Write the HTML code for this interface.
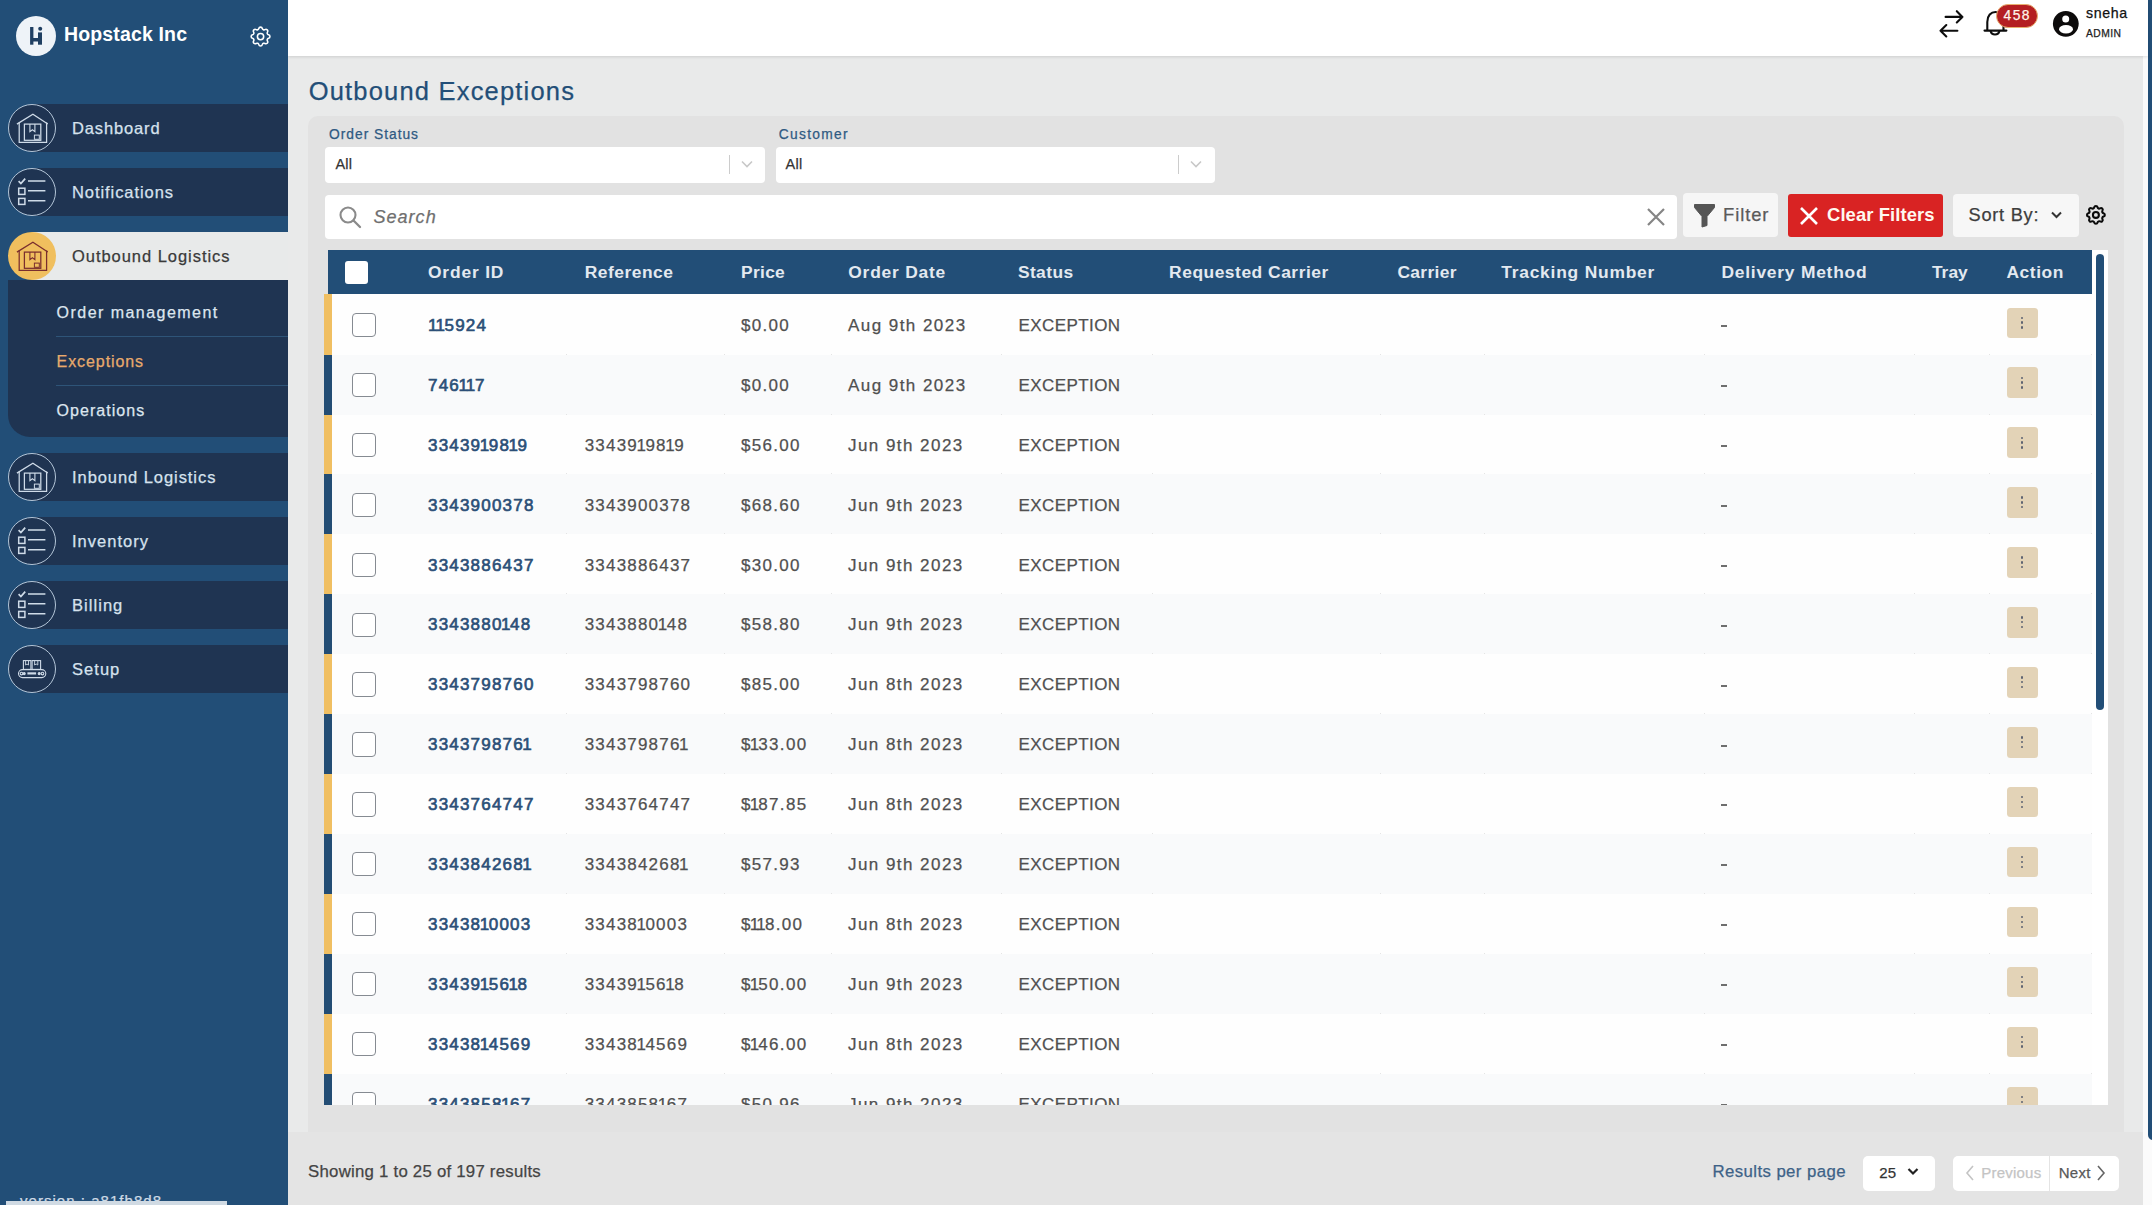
<!DOCTYPE html>
<html><head><meta charset="utf-8"><title>Outbound Exceptions</title>
<style>
html,body{margin:0;padding:0;width:2152px;height:1205px;overflow:hidden;background:#e9eaea}
body{position:relative;font-family:"Liberation Sans",sans-serif}
.r{position:absolute;box-sizing:border-box}
.t{position:absolute;white-space:nowrap;line-height:1;-webkit-font-smoothing:antialiased;-webkit-text-stroke:0.25px currentColor}
.t[style*='font-weight:700']{-webkit-text-stroke:0}
</style></head><body>
<div class="r" style="left:0px;top:0px;width:2152px;height:1205px;background:#e9eaea;"></div>
<div class="r" style="left:2143px;top:0px;width:9px;height:1205px;background:#fbfbfb;"></div>
<div class="r" style="left:2148px;top:0;width:10px;height:1140px;background:#224e77;border-radius:0 0 5px 5px"></div>
<div class="r" style="left:288px;top:0px;width:1860px;height:56px;background:#ffffff;box-shadow:0 1px 3px rgba(0,0,0,0.12);"></div>
<div class="r" style="left:288px;top:1132px;width:1855px;height:73px;background:#e4e4e4;"></div>
<div class="r" style="left:308px;top:116px;width:1816px;height:1016px;background:#e2e2e2;border-radius:10px 10px 0 0"></div>
<div class="r" style="left:0px;top:0px;width:288px;height:1205px;background:#224e77;"></div>
<svg class="r" style="left:16px;top:16px" width="40" height="40" viewBox="0 0 40 40">
<circle cx="20" cy="20" r="20" fill="#eef3f8"/>
<rect x="14.1" y="11" width="3.3" height="17.7" fill="#1f3f62"/>
<rect x="17" y="22" width="5.5" height="3.5" fill="#1f3f62"/>
<rect x="22" y="16.4" width="4" height="12.3" fill="#1f3f62"/>
<circle cx="24.2" cy="12.7" r="2" fill="#1f3f62"/>
</svg>
<div class="t" style="left:64.0px;top:25.29px;font-size:19.5px;color:#ffffff;font-weight:700;letter-spacing:0.148px;">Hopstack Inc</div>
<svg class="r" style="left:247.7px;top:23.6px" width="25.1" height="25.1" viewBox="0 0 24 24"><path d="M10.325 4.317c.426-1.756 2.924-1.756 3.35 0a1.724 1.724 0 002.573 1.066c1.543-.94 3.31.826 2.37 2.37a1.724 1.724 0 001.065 2.572c1.756.426 1.756 2.924 0 3.35a1.724 1.724 0 00-1.066 2.573c.94 1.543-.826 3.31-2.37 2.37a1.724 1.724 0 00-2.572 1.065c-.426 1.756-2.924 1.756-3.35 0a1.724 1.724 0 00-2.573-1.066c-1.543.94-3.31-.826-2.37-2.37a1.724 1.724 0 00-1.065-2.572c-1.756-.426-1.756-2.924 0-3.35a1.724 1.724 0 001.066-2.573c-.94-1.543.826-3.31 2.37-2.37.996.608 2.296.07 2.572-1.065z" fill="none" stroke="#ffffff" stroke-width="1.5" stroke-linejoin="round"/><circle cx="12" cy="12" r="3" fill="none" stroke="#ffffff" stroke-width="1.5"/></svg>
<div class="r" style="left:32px;top:104px;width:256px;height:48px;background:#1f3452"></div>
<svg class="r" style="left:8px;top:104px" width="48" height="48" viewBox="0 0 48 48"><circle cx="24" cy="24" r="23.5" fill="#1f3452" stroke="#b4c6d8" stroke-width="1"/><g fill="none" stroke="#cfdbe8" stroke-width="1.25">
<path d="M8.9 20.1 L24.9 10.2 L39.8 20.1"/>
<path d="M11.2 18.6 V38.3 H38.6 V18.6"/>
<rect x="16.4" y="20.1" width="16.4" height="16.2"/>
<path d="M21.9 20.1 V27.6 L24.4 25.8 L26.9 27.6 V20.1" stroke-width="1.1"/>
<rect x="26.4" y="31.1" width="4.9" height="4.2" stroke-width="1"/></g></svg>
<div class="t" style="left:72.0px;top:119.63px;font-size:16.5px;color:#d6e2ee;letter-spacing:0.858px;">Dashboard</div>
<div class="r" style="left:32px;top:168px;width:256px;height:48px;background:#1f3452"></div>
<svg class="r" style="left:8px;top:168px" width="48" height="48" viewBox="0 0 48 48"><circle cx="24" cy="24" r="23.5" fill="#1f3452" stroke="#b4c6d8" stroke-width="1"/><g fill="none" stroke="#cfdbe8" stroke-width="1.5">
<path d="M10.6 13.2 L12.9 15.6 L17.2 10.6" stroke-width="1.7"/>
<rect x="10.7" y="20.2" width="6.2" height="6.2"/>
<rect x="10.7" y="30.4" width="6.2" height="6"/>
<path d="M20 12.9 H37.4 M20 22.8 H37.4 M20 32.8 H37.4"/></g></svg>
<div class="t" style="left:72.0px;top:183.63px;font-size:16.5px;color:#d6e2ee;letter-spacing:0.927px;">Notifications</div>
<div class="r" style="left:8px;top:280px;width:280px;height:157px;background:#1f3452;border-radius:0 0 0 22px"></div>
<div class="r" style="left:32px;top:232px;width:256px;height:48px;background:#e8eaea"></div>
<svg class="r" style="left:8px;top:232px" width="48" height="48" viewBox="0 0 48 48"><circle cx="24" cy="24" r="24" fill="#f0bf5e"/><g fill="none" stroke="#7a2e2e" stroke-width="1.25">
<path d="M8.9 20.1 L24.9 10.2 L39.8 20.1"/>
<path d="M11.2 18.6 V38.3 H38.6 V18.6"/>
<rect x="16.4" y="20.1" width="16.4" height="16.2"/>
<path d="M21.9 20.1 V27.6 L24.4 25.8 L26.9 27.6 V20.1" stroke-width="1.1"/>
<rect x="26.4" y="31.1" width="4.9" height="4.2" stroke-width="1"/></g></svg>
<div class="t" style="left:72.0px;top:247.63px;font-size:16.5px;color:#3a3a3a;letter-spacing:0.955px;">Outbound Logistics</div>
<div class="t" style="left:56.6px;top:304.76px;font-size:16px;color:#dde6ef;letter-spacing:1.458px;">Order management</div>
<div class="r" style="left:56px;top:336px;width:232px;height:1px;background:#2e5478;"></div>
<div class="t" style="left:56.6px;top:353.66px;font-size:16px;color:#e8aa6c;letter-spacing:0.915px;">Exceptions</div>
<div class="r" style="left:56px;top:385px;width:232px;height:1px;background:#2e5478;"></div>
<div class="t" style="left:56.6px;top:402.66px;font-size:16px;color:#dde6ef;letter-spacing:1.037px;">Operations</div>
<div class="r" style="left:32px;top:453px;width:256px;height:48px;background:#1f3452"></div>
<svg class="r" style="left:8px;top:453px" width="48" height="48" viewBox="0 0 48 48"><circle cx="24" cy="24" r="23.5" fill="#1f3452" stroke="#b4c6d8" stroke-width="1"/><g fill="none" stroke="#cfdbe8" stroke-width="1.25">
<path d="M8.9 20.1 L24.9 10.2 L39.8 20.1"/>
<path d="M11.2 18.6 V38.3 H38.6 V18.6"/>
<rect x="16.4" y="20.1" width="16.4" height="16.2"/>
<path d="M21.9 20.1 V27.6 L24.4 25.8 L26.9 27.6 V20.1" stroke-width="1.1"/>
<rect x="26.4" y="31.1" width="4.9" height="4.2" stroke-width="1"/></g></svg>
<div class="t" style="left:72.0px;top:468.63px;font-size:16.5px;color:#d6e2ee;letter-spacing:0.935px;">Inbound Logistics</div>
<div class="r" style="left:32px;top:517px;width:256px;height:48px;background:#1f3452"></div>
<svg class="r" style="left:8px;top:517px" width="48" height="48" viewBox="0 0 48 48"><circle cx="24" cy="24" r="23.5" fill="#1f3452" stroke="#b4c6d8" stroke-width="1"/><g fill="none" stroke="#cfdbe8" stroke-width="1.5">
<path d="M10.6 13.2 L12.9 15.6 L17.2 10.6" stroke-width="1.7"/>
<rect x="10.7" y="20.2" width="6.2" height="6.2"/>
<rect x="10.7" y="30.4" width="6.2" height="6"/>
<path d="M20 12.9 H37.4 M20 22.8 H37.4 M20 32.8 H37.4"/></g></svg>
<div class="t" style="left:72.0px;top:532.63px;font-size:16.5px;color:#d6e2ee;letter-spacing:1.016px;">Inventory</div>
<div class="r" style="left:32px;top:581px;width:256px;height:48px;background:#1f3452"></div>
<svg class="r" style="left:8px;top:581px" width="48" height="48" viewBox="0 0 48 48"><circle cx="24" cy="24" r="23.5" fill="#1f3452" stroke="#b4c6d8" stroke-width="1"/><g fill="none" stroke="#cfdbe8" stroke-width="1.5">
<path d="M10.6 13.2 L12.9 15.6 L17.2 10.6" stroke-width="1.7"/>
<rect x="10.7" y="20.2" width="6.2" height="6.2"/>
<rect x="10.7" y="30.4" width="6.2" height="6"/>
<path d="M20 12.9 H37.4 M20 22.8 H37.4 M20 32.8 H37.4"/></g></svg>
<div class="t" style="left:72.0px;top:596.63px;font-size:16.5px;color:#d6e2ee;letter-spacing:1.045px;">Billing</div>
<div class="r" style="left:32px;top:645px;width:256px;height:48px;background:#1f3452"></div>
<svg class="r" style="left:8px;top:645px" width="48" height="48" viewBox="0 0 48 48"><circle cx="24" cy="24" r="23.5" fill="#1f3452" stroke="#b4c6d8" stroke-width="1"/><g fill="none" stroke="#cfdbe8" stroke-width="1.1">
<rect x="10.5" y="24.6" width="27.3" height="8" rx="4"/>
<rect x="19.4" y="27.3" width="8.7" height="2.2" fill="#cfdbe8" stroke="none"/>
<circle cx="13.5" cy="28.6" r="1.3"/><circle cx="16.2" cy="28.6" r="1" fill="#cfdbe8"/>
<circle cx="31.2" cy="28.6" r="1" fill="#cfdbe8"/><circle cx="34.5" cy="28.6" r="1.3"/>
<rect x="15.4" y="15.6" width="7.5" height="8.8"/>
<rect x="24.1" y="15.6" width="8.5" height="8.8"/>
<path d="M17.6 15.6 V20 L19 19 L20.5 20 V15.6 M26.6 15.6 V20 L28.2 19 L29.8 20 V15.6" stroke-width="0.9"/></g></svg>
<div class="t" style="left:72.0px;top:660.63px;font-size:16.5px;color:#d6e2ee;letter-spacing:1.044px;">Setup</div>
<div class="t" style="left:20.0px;top:1192.80px;font-size:15px;color:#cfdbe6;letter-spacing:1.034px;">version : a81fb8d8</div>
<div class="r" style="left:6px;top:1201px;width:221px;height:4px;background:#d0dae3;"></div>
<svg class="r" style="left:1930px;top:0px" width="90" height="45" viewBox="1930 0 90 45">
<g fill="none" stroke="#0d0d0d" stroke-width="2.1" stroke-linecap="round" stroke-linejoin="round">
<path d="M1945.6 16.9 H1962.4 M1956.8 11.2 L1962.4 16.9 L1956.8 22.4"/>
<path d="M1957.4 30.7 H1940.5 M1946.3 25.1 L1940.5 30.7 L1946.3 36.4"/>
<path d="M1984.5 30.6 H2006.4 M1987.3 30.6 V22 C1987.3 15.5 1991 12 1995.5 12 C2000 12 2003.5 15.5 2003.5 22 V30.6"/>
<path d="M1990.6 31 A4.5 4.5 0 0 0 1999.4 31"/>
</g></svg>
<div class="r" style="left:1996.2px;top:4.1px;width:41.7px;height:23.5px;background:#b41f22;border-radius:12px;border:1px solid #e8b070"></div>
<div class="t" style="left:2003.6px;top:8.72px;font-size:13.8px;color:#fff6ea;letter-spacing:1.384px;">458</div>
<svg class="r" style="left:2045px;top:0px" width="40" height="45" viewBox="2045 0 40 45">
<circle cx="2065.8" cy="23.85" r="12.9" fill="#0d0b0b"/>
<circle cx="2065.7" cy="19" r="3.5" fill="#fff"/>
<ellipse cx="2066" cy="29.3" rx="7" ry="4.2" fill="#fff"/>
</svg>
<div class="t" style="left:2086.0px;top:5.98px;font-size:14.2px;color:#111;letter-spacing:0.636px;">sneha</div>
<div class="t" style="left:2086.0px;top:29.08px;font-size:10.3px;color:#222;letter-spacing:0.428px;">ADMIN</div>
<div class="t" style="left:308.7px;top:79.01px;font-size:25.5px;color:#224e77;letter-spacing:1.192px;">Outbound Exceptions</div>
<div class="t" style="left:329.1px;top:127.92px;font-size:13.8px;color:#2f5a82;letter-spacing:0.971px;">Order Status</div>
<div class="t" style="left:778.7px;top:128.12px;font-size:13.8px;color:#2f5a82;letter-spacing:1.312px;">Customer</div>
<div class="r" style="left:325px;top:147px;width:440px;height:36px;background:#fff;border-radius:4px"></div>
<div class="t" style="left:335.5px;top:156.73px;font-size:14.5px;color:#333;letter-spacing:0.188px;">All</div>
<div class="r" style="left:729px;top:155px;width:1px;height:19px;background:#cccccc;"></div>
<svg class="r" style="left:740px;top:159px" width="14" height="10" viewBox="0 0 14 10"><path d="M2 2.5 L7 7.5 L12 2.5" fill="none" stroke="#c8c8c8" stroke-width="1.6"/></svg>
<div class="r" style="left:776px;top:147px;width:439px;height:36px;background:#fff;border-radius:4px"></div>
<div class="t" style="left:785.6px;top:156.73px;font-size:14.5px;color:#333;letter-spacing:0.238px;">All</div>
<div class="r" style="left:1178px;top:155px;width:1px;height:19px;background:#cccccc;"></div>
<svg class="r" style="left:1189px;top:159px" width="14" height="10" viewBox="0 0 14 10"><path d="M2 2.5 L7 7.5 L12 2.5" fill="none" stroke="#c8c8c8" stroke-width="1.6"/></svg>
<div class="r" style="left:325px;top:195px;width:1352px;height:44px;background:#fff;border-radius:4px"></div>
<svg class="r" style="left:338px;top:205px" width="25" height="25" viewBox="0 0 25 25">
<circle cx="10" cy="10" r="7.5" fill="none" stroke="#8a8a8a" stroke-width="2.1"/>
<path d="M15.5 15.5 L22 22" stroke="#8a8a8a" stroke-width="2.3" stroke-linecap="round"/></svg>
<div class="t" style="left:373.4px;top:208.26px;font-size:18px;color:#6f6f6f;font-style:italic;letter-spacing:1.051px;">Search</div>
<svg class="r" style="left:1646px;top:207px" width="20" height="20" viewBox="0 0 20 20">
<path d="M2 2 L18 18 M18 2 L2 18" stroke="#858585" stroke-width="2.2"/></svg>
<div class="r" style="left:1683px;top:193px;width:95px;height:44px;background:#f6f6f6;border-radius:4px"></div>
<svg class="r" style="left:1693px;top:203px" width="23" height="25" viewBox="0 0 23 25">
<path d="M1.5 1.5 H21.5 V4.5 L14 13.5 V22.5 L9 24 V13.5 L1.5 4.5 Z" fill="#555" stroke="#555" stroke-width="1" stroke-linejoin="round"/></svg>
<div class="t" style="left:1723.0px;top:205.72px;font-size:18.4px;color:#5a5a5a;letter-spacing:0.925px;">Filter</div>
<div class="r" style="left:1788px;top:194px;width:155px;height:43px;background:#d92323;border-radius:3px"></div>
<svg class="r" style="left:1799px;top:206px" width="20" height="20" viewBox="0 0 20 20">
<path d="M2 2 L18 18 M18 2 L2 18" stroke="#fff" stroke-width="2.6"/></svg>
<div class="t" style="left:1827.0px;top:205.72px;font-size:18.4px;color:#fff8f0;font-weight:700;letter-spacing:0.107px;">Clear Filters</div>
<div class="r" style="left:1953px;top:194px;width:126px;height:43px;background:#f7f7f7;border-radius:4px"></div>
<div class="t" style="left:1968.5px;top:205.89px;font-size:18.2px;color:#3d3d3d;letter-spacing:0.759px;">Sort By:</div>
<svg class="r" style="left:2050px;top:210px" width="13" height="10" viewBox="0 0 13 10">
<path d="M2 2.5 L6.5 7 L11 2.5" fill="none" stroke="#333" stroke-width="2"/></svg>
<svg class="r" style="left:2083.6px;top:203.2px" width="23.8" height="23.8" viewBox="0 0 24 24"><path d="M10.325 4.317c.426-1.756 2.924-1.756 3.35 0a1.724 1.724 0 002.573 1.066c1.543-.94 3.31.826 2.37 2.37a1.724 1.724 0 001.065 2.572c1.756.426 1.756 2.924 0 3.35a1.724 1.724 0 00-1.066 2.573c.94 1.543-.826 3.31-2.37 2.37a1.724 1.724 0 00-2.572 1.065c-.426 1.756-2.924 1.756-3.35 0a1.724 1.724 0 00-2.573-1.066c-1.543.94-3.31-.826-2.37-2.37a1.724 1.724 0 00-1.065-2.572c-1.756-.426-1.756-2.924 0-3.35a1.724 1.724 0 001.066-2.573c-.94-1.543.826-3.31 2.37-2.37.996.608 2.296.07 2.572-1.065z" fill="none" stroke="#0a0a0a" stroke-width="2.1" stroke-linejoin="round"/><circle cx="12" cy="12" r="3" fill="none" stroke="#0a0a0a" stroke-width="2.1"/></svg>
<div class="r" style="left:328px;top:250px;width:1780px;height:855px;background:#ffffff;"></div>
<div class="r" style="left:328px;top:250px;width:1764px;height:44px;background:#224e77;"></div>
<div class="r" style="left:345px;top:261px;width:23px;height:23px;background:#fff;border-radius:3px"></div>
<div class="t" style="left:428.0px;top:263.57px;font-size:17.4px;color:#e3e9f0;font-weight:700;letter-spacing:0.829px;">Order ID</div>
<div class="t" style="left:584.7px;top:263.57px;font-size:17.4px;color:#e3e9f0;font-weight:700;letter-spacing:0.511px;">Reference</div>
<div class="t" style="left:741.1px;top:263.57px;font-size:17.4px;color:#e3e9f0;font-weight:700;letter-spacing:0.288px;">Price</div>
<div class="t" style="left:848.3px;top:263.57px;font-size:17.4px;color:#e3e9f0;font-weight:700;letter-spacing:0.779px;">Order Date</div>
<div class="t" style="left:1017.9px;top:263.57px;font-size:17.4px;color:#e3e9f0;font-weight:700;letter-spacing:0.409px;">Status</div>
<div class="t" style="left:1169.1px;top:263.57px;font-size:17.4px;color:#e3e9f0;font-weight:700;letter-spacing:0.526px;">Requested Carrier</div>
<div class="t" style="left:1397.4px;top:263.57px;font-size:17.4px;color:#e3e9f0;font-weight:700;letter-spacing:0.359px;">Carrier</div>
<div class="t" style="left:1501.2px;top:263.57px;font-size:17.4px;color:#e3e9f0;font-weight:700;letter-spacing:0.787px;">Tracking Number</div>
<div class="t" style="left:1721.4px;top:263.57px;font-size:17.4px;color:#e3e9f0;font-weight:700;letter-spacing:0.777px;">Delivery Method</div>
<div class="t" style="left:1931.9px;top:263.57px;font-size:17.4px;color:#e3e9f0;font-weight:700;letter-spacing:0.040px;">Tray</div>
<div class="t" style="left:2006.5px;top:263.57px;font-size:17.4px;color:#e3e9f0;font-weight:700;letter-spacing:0.558px;">Action</div>
<div class="r" style="left:0;top:0;width:2152px;height:1105px;overflow:hidden">
<div class="r" style="left:332px;top:294px;width:1760px;height:60.63px;background:#fefefe;"></div>
<div class="r" style="left:323.8px;top:294px;width:8.4px;height:60.63px;background:#f0bf62;"></div>
<div class="r" style="left:566px;top:353.63px;width:1px;height:2px;background:#e4e4e4;"></div>
<div class="r" style="left:724px;top:353.63px;width:1px;height:2px;background:#e4e4e4;"></div>
<div class="r" style="left:831px;top:353.63px;width:1px;height:2px;background:#e4e4e4;"></div>
<div class="r" style="left:1001px;top:353.63px;width:1px;height:2px;background:#e4e4e4;"></div>
<div class="r" style="left:1152px;top:353.63px;width:1px;height:2px;background:#e4e4e4;"></div>
<div class="r" style="left:1380px;top:353.63px;width:1px;height:2px;background:#e4e4e4;"></div>
<div class="r" style="left:1484px;top:353.63px;width:1px;height:2px;background:#e4e4e4;"></div>
<div class="r" style="left:1704px;top:353.63px;width:1px;height:2px;background:#e4e4e4;"></div>
<div class="r" style="left:1914px;top:353.63px;width:1px;height:2px;background:#e4e4e4;"></div>
<div class="r" style="left:1989px;top:353.63px;width:1px;height:2px;background:#e4e4e4;"></div>
<div class="r" style="left:2091px;top:353.63px;width:1px;height:2px;background:#e4e4e4;"></div>
<div class="r" style="left:352.2px;top:312.90px;width:24.2px;height:24.2px;border:1.3px solid #868b92;border-radius:4px;background:#fff"></div>
<div class="t" style="left:428.0px;top:316.81px;font-size:17px;color:#2b4f77;letter-spacing:1.200px;-webkit-text-stroke:0.65px #2b4f77;"><span style="margin:0 -1.60px 0 0.00px">1</span><span style="margin:0 -1.60px 0 -1.60px">1</span>5924</div>
<div class="t" style="left:741.0px;top:316.81px;font-size:17px;color:#505050;letter-spacing:1.300px;">$0.00</div>
<div class="t" style="left:848.0px;top:316.81px;font-size:17px;color:#505050;letter-spacing:1.450px;">Aug 9th 2023</div>
<div class="t" style="left:1018.5px;top:316.81px;font-size:17px;color:#505050;letter-spacing:0.420px;">EXCEPTION</div>
<div class="r" style="left:1720.5px;top:325px;width:6.5px;height:1.6px;background:#6e6e6e;"></div>
<div class="r" style="left:2006.5px;top:307.50px;width:31.5px;height:30.5px;background:#e3d3b7;border-radius:3.5px"></div>
<div class="r" style="left:2021px;top:316.65px;width:2.4px;height:2.4px;background:#5e6370;border-radius:50%"></div>
<div class="r" style="left:2021px;top:321.45px;width:2.4px;height:2.4px;background:#5e6370;border-radius:50%"></div>
<div class="r" style="left:2021px;top:326.25px;width:2.4px;height:2.4px;background:#5e6370;border-radius:50%"></div>
<div class="r" style="left:332px;top:354.63px;width:1760px;height:59.93px;background:#f9fafb;"></div>
<div class="r" style="left:323.8px;top:354.63px;width:8.4px;height:59.93px;background:#234d74;"></div>
<div class="r" style="left:566px;top:413.56px;width:1px;height:2px;background:#e4e4e4;"></div>
<div class="r" style="left:724px;top:413.56px;width:1px;height:2px;background:#e4e4e4;"></div>
<div class="r" style="left:831px;top:413.56px;width:1px;height:2px;background:#e4e4e4;"></div>
<div class="r" style="left:1001px;top:413.56px;width:1px;height:2px;background:#e4e4e4;"></div>
<div class="r" style="left:1152px;top:413.56px;width:1px;height:2px;background:#e4e4e4;"></div>
<div class="r" style="left:1380px;top:413.56px;width:1px;height:2px;background:#e4e4e4;"></div>
<div class="r" style="left:1484px;top:413.56px;width:1px;height:2px;background:#e4e4e4;"></div>
<div class="r" style="left:1704px;top:413.56px;width:1px;height:2px;background:#e4e4e4;"></div>
<div class="r" style="left:1914px;top:413.56px;width:1px;height:2px;background:#e4e4e4;"></div>
<div class="r" style="left:1989px;top:413.56px;width:1px;height:2px;background:#e4e4e4;"></div>
<div class="r" style="left:2091px;top:413.56px;width:1px;height:2px;background:#e4e4e4;"></div>
<div class="r" style="left:352.2px;top:372.83px;width:24.2px;height:24.2px;border:1.3px solid #868b92;border-radius:4px;background:#fff"></div>
<div class="t" style="left:428.0px;top:376.74px;font-size:17px;color:#2b4f77;letter-spacing:1.200px;-webkit-text-stroke:0.65px #2b4f77;">746<span style="margin:0 -1.60px 0 -1.60px">1</span><span style="margin:0 -1.60px 0 -1.60px">1</span>7</div>
<div class="t" style="left:741.0px;top:376.74px;font-size:17px;color:#505050;letter-spacing:1.300px;">$0.00</div>
<div class="t" style="left:848.0px;top:376.74px;font-size:17px;color:#505050;letter-spacing:1.450px;">Aug 9th 2023</div>
<div class="t" style="left:1018.5px;top:376.74px;font-size:17px;color:#505050;letter-spacing:0.420px;">EXCEPTION</div>
<div class="r" style="left:1720.5px;top:385px;width:6.5px;height:1.6px;background:#6e6e6e;"></div>
<div class="r" style="left:2006.5px;top:367.43px;width:31.5px;height:30.5px;background:#e3d3b7;border-radius:3.5px"></div>
<div class="r" style="left:2021px;top:376.58px;width:2.4px;height:2.4px;background:#5e6370;border-radius:50%"></div>
<div class="r" style="left:2021px;top:381.38px;width:2.4px;height:2.4px;background:#5e6370;border-radius:50%"></div>
<div class="r" style="left:2021px;top:386.18px;width:2.4px;height:2.4px;background:#5e6370;border-radius:50%"></div>
<div class="r" style="left:332px;top:414.56px;width:1760px;height:59.93px;background:#fefefe;"></div>
<div class="r" style="left:323.8px;top:414.56px;width:8.4px;height:59.93px;background:#f0bf62;"></div>
<div class="r" style="left:566px;top:473.49px;width:1px;height:2px;background:#e4e4e4;"></div>
<div class="r" style="left:724px;top:473.49px;width:1px;height:2px;background:#e4e4e4;"></div>
<div class="r" style="left:831px;top:473.49px;width:1px;height:2px;background:#e4e4e4;"></div>
<div class="r" style="left:1001px;top:473.49px;width:1px;height:2px;background:#e4e4e4;"></div>
<div class="r" style="left:1152px;top:473.49px;width:1px;height:2px;background:#e4e4e4;"></div>
<div class="r" style="left:1380px;top:473.49px;width:1px;height:2px;background:#e4e4e4;"></div>
<div class="r" style="left:1484px;top:473.49px;width:1px;height:2px;background:#e4e4e4;"></div>
<div class="r" style="left:1704px;top:473.49px;width:1px;height:2px;background:#e4e4e4;"></div>
<div class="r" style="left:1914px;top:473.49px;width:1px;height:2px;background:#e4e4e4;"></div>
<div class="r" style="left:1989px;top:473.49px;width:1px;height:2px;background:#e4e4e4;"></div>
<div class="r" style="left:2091px;top:473.49px;width:1px;height:2px;background:#e4e4e4;"></div>
<div class="r" style="left:352.2px;top:432.76px;width:24.2px;height:24.2px;border:1.3px solid #868b92;border-radius:4px;background:#fff"></div>
<div class="t" style="left:428.0px;top:436.67px;font-size:17px;color:#2b4f77;letter-spacing:1.200px;-webkit-text-stroke:0.65px #2b4f77;">33439<span style="margin:0 -1.60px 0 -1.60px">1</span>98<span style="margin:0 -1.60px 0 -1.60px">1</span>9</div>
<div class="t" style="left:584.7px;top:436.67px;font-size:17px;color:#505050;letter-spacing:1.200px;">33439<span style="margin:0 -1.60px 0 -1.60px">1</span>98<span style="margin:0 -1.60px 0 -1.60px">1</span>9</div>
<div class="t" style="left:741.0px;top:436.67px;font-size:17px;color:#505050;letter-spacing:1.300px;">$56.00</div>
<div class="t" style="left:848.0px;top:436.67px;font-size:17px;color:#505050;letter-spacing:1.450px;">Jun 9th 2023</div>
<div class="t" style="left:1018.5px;top:436.67px;font-size:17px;color:#505050;letter-spacing:0.420px;">EXCEPTION</div>
<div class="r" style="left:1720.5px;top:445px;width:6.5px;height:1.6px;background:#6e6e6e;"></div>
<div class="r" style="left:2006.5px;top:427.36px;width:31.5px;height:30.5px;background:#e3d3b7;border-radius:3.5px"></div>
<div class="r" style="left:2021px;top:436.51px;width:2.4px;height:2.4px;background:#5e6370;border-radius:50%"></div>
<div class="r" style="left:2021px;top:441.31px;width:2.4px;height:2.4px;background:#5e6370;border-radius:50%"></div>
<div class="r" style="left:2021px;top:446.11px;width:2.4px;height:2.4px;background:#5e6370;border-radius:50%"></div>
<div class="r" style="left:332px;top:474.49px;width:1760px;height:59.93px;background:#f9fafb;"></div>
<div class="r" style="left:323.8px;top:474.49px;width:8.4px;height:59.93px;background:#234d74;"></div>
<div class="r" style="left:566px;top:533.42px;width:1px;height:2px;background:#e4e4e4;"></div>
<div class="r" style="left:724px;top:533.42px;width:1px;height:2px;background:#e4e4e4;"></div>
<div class="r" style="left:831px;top:533.42px;width:1px;height:2px;background:#e4e4e4;"></div>
<div class="r" style="left:1001px;top:533.42px;width:1px;height:2px;background:#e4e4e4;"></div>
<div class="r" style="left:1152px;top:533.42px;width:1px;height:2px;background:#e4e4e4;"></div>
<div class="r" style="left:1380px;top:533.42px;width:1px;height:2px;background:#e4e4e4;"></div>
<div class="r" style="left:1484px;top:533.42px;width:1px;height:2px;background:#e4e4e4;"></div>
<div class="r" style="left:1704px;top:533.42px;width:1px;height:2px;background:#e4e4e4;"></div>
<div class="r" style="left:1914px;top:533.42px;width:1px;height:2px;background:#e4e4e4;"></div>
<div class="r" style="left:1989px;top:533.42px;width:1px;height:2px;background:#e4e4e4;"></div>
<div class="r" style="left:2091px;top:533.42px;width:1px;height:2px;background:#e4e4e4;"></div>
<div class="r" style="left:352.2px;top:492.69px;width:24.2px;height:24.2px;border:1.3px solid #868b92;border-radius:4px;background:#fff"></div>
<div class="t" style="left:428.0px;top:496.60px;font-size:17px;color:#2b4f77;letter-spacing:1.200px;-webkit-text-stroke:0.65px #2b4f77;">3343900378</div>
<div class="t" style="left:584.7px;top:496.60px;font-size:17px;color:#505050;letter-spacing:1.200px;">3343900378</div>
<div class="t" style="left:741.0px;top:496.60px;font-size:17px;color:#505050;letter-spacing:1.300px;">$68.60</div>
<div class="t" style="left:848.0px;top:496.60px;font-size:17px;color:#505050;letter-spacing:1.450px;">Jun 9th 2023</div>
<div class="t" style="left:1018.5px;top:496.60px;font-size:17px;color:#505050;letter-spacing:0.420px;">EXCEPTION</div>
<div class="r" style="left:1720.5px;top:505px;width:6.5px;height:1.6px;background:#6e6e6e;"></div>
<div class="r" style="left:2006.5px;top:487.29px;width:31.5px;height:30.5px;background:#e3d3b7;border-radius:3.5px"></div>
<div class="r" style="left:2021px;top:496.44px;width:2.4px;height:2.4px;background:#5e6370;border-radius:50%"></div>
<div class="r" style="left:2021px;top:501.24px;width:2.4px;height:2.4px;background:#5e6370;border-radius:50%"></div>
<div class="r" style="left:2021px;top:506.04px;width:2.4px;height:2.4px;background:#5e6370;border-radius:50%"></div>
<div class="r" style="left:332px;top:534.42px;width:1760px;height:59.93px;background:#fefefe;"></div>
<div class="r" style="left:323.8px;top:534.42px;width:8.4px;height:59.93px;background:#f0bf62;"></div>
<div class="r" style="left:566px;top:593.35px;width:1px;height:2px;background:#e4e4e4;"></div>
<div class="r" style="left:724px;top:593.35px;width:1px;height:2px;background:#e4e4e4;"></div>
<div class="r" style="left:831px;top:593.35px;width:1px;height:2px;background:#e4e4e4;"></div>
<div class="r" style="left:1001px;top:593.35px;width:1px;height:2px;background:#e4e4e4;"></div>
<div class="r" style="left:1152px;top:593.35px;width:1px;height:2px;background:#e4e4e4;"></div>
<div class="r" style="left:1380px;top:593.35px;width:1px;height:2px;background:#e4e4e4;"></div>
<div class="r" style="left:1484px;top:593.35px;width:1px;height:2px;background:#e4e4e4;"></div>
<div class="r" style="left:1704px;top:593.35px;width:1px;height:2px;background:#e4e4e4;"></div>
<div class="r" style="left:1914px;top:593.35px;width:1px;height:2px;background:#e4e4e4;"></div>
<div class="r" style="left:1989px;top:593.35px;width:1px;height:2px;background:#e4e4e4;"></div>
<div class="r" style="left:2091px;top:593.35px;width:1px;height:2px;background:#e4e4e4;"></div>
<div class="r" style="left:352.2px;top:552.62px;width:24.2px;height:24.2px;border:1.3px solid #868b92;border-radius:4px;background:#fff"></div>
<div class="t" style="left:428.0px;top:556.53px;font-size:17px;color:#2b4f77;letter-spacing:1.200px;-webkit-text-stroke:0.65px #2b4f77;">3343886437</div>
<div class="t" style="left:584.7px;top:556.53px;font-size:17px;color:#505050;letter-spacing:1.200px;">3343886437</div>
<div class="t" style="left:741.0px;top:556.53px;font-size:17px;color:#505050;letter-spacing:1.300px;">$30.00</div>
<div class="t" style="left:848.0px;top:556.53px;font-size:17px;color:#505050;letter-spacing:1.450px;">Jun 9th 2023</div>
<div class="t" style="left:1018.5px;top:556.53px;font-size:17px;color:#505050;letter-spacing:0.420px;">EXCEPTION</div>
<div class="r" style="left:1720.5px;top:565px;width:6.5px;height:1.6px;background:#6e6e6e;"></div>
<div class="r" style="left:2006.5px;top:547.22px;width:31.5px;height:30.5px;background:#e3d3b7;border-radius:3.5px"></div>
<div class="r" style="left:2021px;top:556.37px;width:2.4px;height:2.4px;background:#5e6370;border-radius:50%"></div>
<div class="r" style="left:2021px;top:561.17px;width:2.4px;height:2.4px;background:#5e6370;border-radius:50%"></div>
<div class="r" style="left:2021px;top:565.97px;width:2.4px;height:2.4px;background:#5e6370;border-radius:50%"></div>
<div class="r" style="left:332px;top:594.35px;width:1760px;height:59.93px;background:#f9fafb;"></div>
<div class="r" style="left:323.8px;top:594.35px;width:8.4px;height:59.93px;background:#234d74;"></div>
<div class="r" style="left:566px;top:653.28px;width:1px;height:2px;background:#e4e4e4;"></div>
<div class="r" style="left:724px;top:653.28px;width:1px;height:2px;background:#e4e4e4;"></div>
<div class="r" style="left:831px;top:653.28px;width:1px;height:2px;background:#e4e4e4;"></div>
<div class="r" style="left:1001px;top:653.28px;width:1px;height:2px;background:#e4e4e4;"></div>
<div class="r" style="left:1152px;top:653.28px;width:1px;height:2px;background:#e4e4e4;"></div>
<div class="r" style="left:1380px;top:653.28px;width:1px;height:2px;background:#e4e4e4;"></div>
<div class="r" style="left:1484px;top:653.28px;width:1px;height:2px;background:#e4e4e4;"></div>
<div class="r" style="left:1704px;top:653.28px;width:1px;height:2px;background:#e4e4e4;"></div>
<div class="r" style="left:1914px;top:653.28px;width:1px;height:2px;background:#e4e4e4;"></div>
<div class="r" style="left:1989px;top:653.28px;width:1px;height:2px;background:#e4e4e4;"></div>
<div class="r" style="left:2091px;top:653.28px;width:1px;height:2px;background:#e4e4e4;"></div>
<div class="r" style="left:352.2px;top:612.55px;width:24.2px;height:24.2px;border:1.3px solid #868b92;border-radius:4px;background:#fff"></div>
<div class="t" style="left:428.0px;top:616.46px;font-size:17px;color:#2b4f77;letter-spacing:1.200px;-webkit-text-stroke:0.65px #2b4f77;">3343880<span style="margin:0 -1.60px 0 -1.60px">1</span>48</div>
<div class="t" style="left:584.7px;top:616.46px;font-size:17px;color:#505050;letter-spacing:1.200px;">3343880<span style="margin:0 -1.60px 0 -1.60px">1</span>48</div>
<div class="t" style="left:741.0px;top:616.46px;font-size:17px;color:#505050;letter-spacing:1.300px;">$58.80</div>
<div class="t" style="left:848.0px;top:616.46px;font-size:17px;color:#505050;letter-spacing:1.450px;">Jun 9th 2023</div>
<div class="t" style="left:1018.5px;top:616.46px;font-size:17px;color:#505050;letter-spacing:0.420px;">EXCEPTION</div>
<div class="r" style="left:1720.5px;top:625px;width:6.5px;height:1.6px;background:#6e6e6e;"></div>
<div class="r" style="left:2006.5px;top:607.15px;width:31.5px;height:30.5px;background:#e3d3b7;border-radius:3.5px"></div>
<div class="r" style="left:2021px;top:616.30px;width:2.4px;height:2.4px;background:#5e6370;border-radius:50%"></div>
<div class="r" style="left:2021px;top:621.10px;width:2.4px;height:2.4px;background:#5e6370;border-radius:50%"></div>
<div class="r" style="left:2021px;top:625.90px;width:2.4px;height:2.4px;background:#5e6370;border-radius:50%"></div>
<div class="r" style="left:332px;top:654.28px;width:1760px;height:59.93px;background:#fefefe;"></div>
<div class="r" style="left:323.8px;top:654.28px;width:8.4px;height:59.93px;background:#f0bf62;"></div>
<div class="r" style="left:566px;top:713.21px;width:1px;height:2px;background:#e4e4e4;"></div>
<div class="r" style="left:724px;top:713.21px;width:1px;height:2px;background:#e4e4e4;"></div>
<div class="r" style="left:831px;top:713.21px;width:1px;height:2px;background:#e4e4e4;"></div>
<div class="r" style="left:1001px;top:713.21px;width:1px;height:2px;background:#e4e4e4;"></div>
<div class="r" style="left:1152px;top:713.21px;width:1px;height:2px;background:#e4e4e4;"></div>
<div class="r" style="left:1380px;top:713.21px;width:1px;height:2px;background:#e4e4e4;"></div>
<div class="r" style="left:1484px;top:713.21px;width:1px;height:2px;background:#e4e4e4;"></div>
<div class="r" style="left:1704px;top:713.21px;width:1px;height:2px;background:#e4e4e4;"></div>
<div class="r" style="left:1914px;top:713.21px;width:1px;height:2px;background:#e4e4e4;"></div>
<div class="r" style="left:1989px;top:713.21px;width:1px;height:2px;background:#e4e4e4;"></div>
<div class="r" style="left:2091px;top:713.21px;width:1px;height:2px;background:#e4e4e4;"></div>
<div class="r" style="left:352.2px;top:672.48px;width:24.2px;height:24.2px;border:1.3px solid #868b92;border-radius:4px;background:#fff"></div>
<div class="t" style="left:428.0px;top:676.39px;font-size:17px;color:#2b4f77;letter-spacing:1.200px;-webkit-text-stroke:0.65px #2b4f77;">3343798760</div>
<div class="t" style="left:584.7px;top:676.39px;font-size:17px;color:#505050;letter-spacing:1.200px;">3343798760</div>
<div class="t" style="left:741.0px;top:676.39px;font-size:17px;color:#505050;letter-spacing:1.300px;">$85.00</div>
<div class="t" style="left:848.0px;top:676.39px;font-size:17px;color:#505050;letter-spacing:1.450px;">Jun 8th 2023</div>
<div class="t" style="left:1018.5px;top:676.39px;font-size:17px;color:#505050;letter-spacing:0.420px;">EXCEPTION</div>
<div class="r" style="left:1720.5px;top:685px;width:6.5px;height:1.6px;background:#6e6e6e;"></div>
<div class="r" style="left:2006.5px;top:667.08px;width:31.5px;height:30.5px;background:#e3d3b7;border-radius:3.5px"></div>
<div class="r" style="left:2021px;top:676.23px;width:2.4px;height:2.4px;background:#5e6370;border-radius:50%"></div>
<div class="r" style="left:2021px;top:681.03px;width:2.4px;height:2.4px;background:#5e6370;border-radius:50%"></div>
<div class="r" style="left:2021px;top:685.83px;width:2.4px;height:2.4px;background:#5e6370;border-radius:50%"></div>
<div class="r" style="left:332px;top:714.21px;width:1760px;height:59.93px;background:#f9fafb;"></div>
<div class="r" style="left:323.8px;top:714.21px;width:8.4px;height:59.93px;background:#234d74;"></div>
<div class="r" style="left:566px;top:773.14px;width:1px;height:2px;background:#e4e4e4;"></div>
<div class="r" style="left:724px;top:773.14px;width:1px;height:2px;background:#e4e4e4;"></div>
<div class="r" style="left:831px;top:773.14px;width:1px;height:2px;background:#e4e4e4;"></div>
<div class="r" style="left:1001px;top:773.14px;width:1px;height:2px;background:#e4e4e4;"></div>
<div class="r" style="left:1152px;top:773.14px;width:1px;height:2px;background:#e4e4e4;"></div>
<div class="r" style="left:1380px;top:773.14px;width:1px;height:2px;background:#e4e4e4;"></div>
<div class="r" style="left:1484px;top:773.14px;width:1px;height:2px;background:#e4e4e4;"></div>
<div class="r" style="left:1704px;top:773.14px;width:1px;height:2px;background:#e4e4e4;"></div>
<div class="r" style="left:1914px;top:773.14px;width:1px;height:2px;background:#e4e4e4;"></div>
<div class="r" style="left:1989px;top:773.14px;width:1px;height:2px;background:#e4e4e4;"></div>
<div class="r" style="left:2091px;top:773.14px;width:1px;height:2px;background:#e4e4e4;"></div>
<div class="r" style="left:352.2px;top:732.41px;width:24.2px;height:24.2px;border:1.3px solid #868b92;border-radius:4px;background:#fff"></div>
<div class="t" style="left:428.0px;top:736.32px;font-size:17px;color:#2b4f77;letter-spacing:1.200px;-webkit-text-stroke:0.65px #2b4f77;">334379876<span style="margin:0 -1.60px 0 -1.60px">1</span></div>
<div class="t" style="left:584.7px;top:736.32px;font-size:17px;color:#505050;letter-spacing:1.200px;">334379876<span style="margin:0 -1.60px 0 -1.60px">1</span></div>
<div class="t" style="left:741.0px;top:736.32px;font-size:17px;color:#505050;letter-spacing:1.300px;">$<span style="margin:0 -2.10px 0 -2.10px">1</span>33.00</div>
<div class="t" style="left:848.0px;top:736.32px;font-size:17px;color:#505050;letter-spacing:1.450px;">Jun 8th 2023</div>
<div class="t" style="left:1018.5px;top:736.32px;font-size:17px;color:#505050;letter-spacing:0.420px;">EXCEPTION</div>
<div class="r" style="left:1720.5px;top:745px;width:6.5px;height:1.6px;background:#6e6e6e;"></div>
<div class="r" style="left:2006.5px;top:727.01px;width:31.5px;height:30.5px;background:#e3d3b7;border-radius:3.5px"></div>
<div class="r" style="left:2021px;top:736.16px;width:2.4px;height:2.4px;background:#5e6370;border-radius:50%"></div>
<div class="r" style="left:2021px;top:740.96px;width:2.4px;height:2.4px;background:#5e6370;border-radius:50%"></div>
<div class="r" style="left:2021px;top:745.76px;width:2.4px;height:2.4px;background:#5e6370;border-radius:50%"></div>
<div class="r" style="left:332px;top:774.14px;width:1760px;height:59.93px;background:#fefefe;"></div>
<div class="r" style="left:323.8px;top:774.14px;width:8.4px;height:59.93px;background:#f0bf62;"></div>
<div class="r" style="left:566px;top:833.07px;width:1px;height:2px;background:#e4e4e4;"></div>
<div class="r" style="left:724px;top:833.07px;width:1px;height:2px;background:#e4e4e4;"></div>
<div class="r" style="left:831px;top:833.07px;width:1px;height:2px;background:#e4e4e4;"></div>
<div class="r" style="left:1001px;top:833.07px;width:1px;height:2px;background:#e4e4e4;"></div>
<div class="r" style="left:1152px;top:833.07px;width:1px;height:2px;background:#e4e4e4;"></div>
<div class="r" style="left:1380px;top:833.07px;width:1px;height:2px;background:#e4e4e4;"></div>
<div class="r" style="left:1484px;top:833.07px;width:1px;height:2px;background:#e4e4e4;"></div>
<div class="r" style="left:1704px;top:833.07px;width:1px;height:2px;background:#e4e4e4;"></div>
<div class="r" style="left:1914px;top:833.07px;width:1px;height:2px;background:#e4e4e4;"></div>
<div class="r" style="left:1989px;top:833.07px;width:1px;height:2px;background:#e4e4e4;"></div>
<div class="r" style="left:2091px;top:833.07px;width:1px;height:2px;background:#e4e4e4;"></div>
<div class="r" style="left:352.2px;top:792.34px;width:24.2px;height:24.2px;border:1.3px solid #868b92;border-radius:4px;background:#fff"></div>
<div class="t" style="left:428.0px;top:796.25px;font-size:17px;color:#2b4f77;letter-spacing:1.200px;-webkit-text-stroke:0.65px #2b4f77;">3343764747</div>
<div class="t" style="left:584.7px;top:796.25px;font-size:17px;color:#505050;letter-spacing:1.200px;">3343764747</div>
<div class="t" style="left:741.0px;top:796.25px;font-size:17px;color:#505050;letter-spacing:1.300px;">$<span style="margin:0 -2.10px 0 -2.10px">1</span>87.85</div>
<div class="t" style="left:848.0px;top:796.25px;font-size:17px;color:#505050;letter-spacing:1.450px;">Jun 8th 2023</div>
<div class="t" style="left:1018.5px;top:796.25px;font-size:17px;color:#505050;letter-spacing:0.420px;">EXCEPTION</div>
<div class="r" style="left:1720.5px;top:804px;width:6.5px;height:1.6px;background:#6e6e6e;"></div>
<div class="r" style="left:2006.5px;top:786.94px;width:31.5px;height:30.5px;background:#e3d3b7;border-radius:3.5px"></div>
<div class="r" style="left:2021px;top:796.09px;width:2.4px;height:2.4px;background:#5e6370;border-radius:50%"></div>
<div class="r" style="left:2021px;top:800.89px;width:2.4px;height:2.4px;background:#5e6370;border-radius:50%"></div>
<div class="r" style="left:2021px;top:805.69px;width:2.4px;height:2.4px;background:#5e6370;border-radius:50%"></div>
<div class="r" style="left:332px;top:834.07px;width:1760px;height:59.93px;background:#f9fafb;"></div>
<div class="r" style="left:323.8px;top:834.07px;width:8.4px;height:59.93px;background:#234d74;"></div>
<div class="r" style="left:566px;top:893.0px;width:1px;height:2px;background:#e4e4e4;"></div>
<div class="r" style="left:724px;top:893.0px;width:1px;height:2px;background:#e4e4e4;"></div>
<div class="r" style="left:831px;top:893.0px;width:1px;height:2px;background:#e4e4e4;"></div>
<div class="r" style="left:1001px;top:893.0px;width:1px;height:2px;background:#e4e4e4;"></div>
<div class="r" style="left:1152px;top:893.0px;width:1px;height:2px;background:#e4e4e4;"></div>
<div class="r" style="left:1380px;top:893.0px;width:1px;height:2px;background:#e4e4e4;"></div>
<div class="r" style="left:1484px;top:893.0px;width:1px;height:2px;background:#e4e4e4;"></div>
<div class="r" style="left:1704px;top:893.0px;width:1px;height:2px;background:#e4e4e4;"></div>
<div class="r" style="left:1914px;top:893.0px;width:1px;height:2px;background:#e4e4e4;"></div>
<div class="r" style="left:1989px;top:893.0px;width:1px;height:2px;background:#e4e4e4;"></div>
<div class="r" style="left:2091px;top:893.0px;width:1px;height:2px;background:#e4e4e4;"></div>
<div class="r" style="left:352.2px;top:852.27px;width:24.2px;height:24.2px;border:1.3px solid #868b92;border-radius:4px;background:#fff"></div>
<div class="t" style="left:428.0px;top:856.18px;font-size:17px;color:#2b4f77;letter-spacing:1.200px;-webkit-text-stroke:0.65px #2b4f77;">334384268<span style="margin:0 -1.60px 0 -1.60px">1</span></div>
<div class="t" style="left:584.7px;top:856.18px;font-size:17px;color:#505050;letter-spacing:1.200px;">334384268<span style="margin:0 -1.60px 0 -1.60px">1</span></div>
<div class="t" style="left:741.0px;top:856.18px;font-size:17px;color:#505050;letter-spacing:1.300px;">$57.93</div>
<div class="t" style="left:848.0px;top:856.18px;font-size:17px;color:#505050;letter-spacing:1.450px;">Jun 9th 2023</div>
<div class="t" style="left:1018.5px;top:856.18px;font-size:17px;color:#505050;letter-spacing:0.420px;">EXCEPTION</div>
<div class="r" style="left:1720.5px;top:864px;width:6.5px;height:1.6px;background:#6e6e6e;"></div>
<div class="r" style="left:2006.5px;top:846.87px;width:31.5px;height:30.5px;background:#e3d3b7;border-radius:3.5px"></div>
<div class="r" style="left:2021px;top:856.02px;width:2.4px;height:2.4px;background:#5e6370;border-radius:50%"></div>
<div class="r" style="left:2021px;top:860.82px;width:2.4px;height:2.4px;background:#5e6370;border-radius:50%"></div>
<div class="r" style="left:2021px;top:865.62px;width:2.4px;height:2.4px;background:#5e6370;border-radius:50%"></div>
<div class="r" style="left:332px;top:894.0px;width:1760px;height:59.93px;background:#fefefe;"></div>
<div class="r" style="left:323.8px;top:894.0px;width:8.4px;height:59.93px;background:#f0bf62;"></div>
<div class="r" style="left:566px;top:952.93px;width:1px;height:2px;background:#e4e4e4;"></div>
<div class="r" style="left:724px;top:952.93px;width:1px;height:2px;background:#e4e4e4;"></div>
<div class="r" style="left:831px;top:952.93px;width:1px;height:2px;background:#e4e4e4;"></div>
<div class="r" style="left:1001px;top:952.93px;width:1px;height:2px;background:#e4e4e4;"></div>
<div class="r" style="left:1152px;top:952.93px;width:1px;height:2px;background:#e4e4e4;"></div>
<div class="r" style="left:1380px;top:952.93px;width:1px;height:2px;background:#e4e4e4;"></div>
<div class="r" style="left:1484px;top:952.93px;width:1px;height:2px;background:#e4e4e4;"></div>
<div class="r" style="left:1704px;top:952.93px;width:1px;height:2px;background:#e4e4e4;"></div>
<div class="r" style="left:1914px;top:952.93px;width:1px;height:2px;background:#e4e4e4;"></div>
<div class="r" style="left:1989px;top:952.93px;width:1px;height:2px;background:#e4e4e4;"></div>
<div class="r" style="left:2091px;top:952.93px;width:1px;height:2px;background:#e4e4e4;"></div>
<div class="r" style="left:352.2px;top:912.20px;width:24.2px;height:24.2px;border:1.3px solid #868b92;border-radius:4px;background:#fff"></div>
<div class="t" style="left:428.0px;top:916.11px;font-size:17px;color:#2b4f77;letter-spacing:1.200px;-webkit-text-stroke:0.65px #2b4f77;">33438<span style="margin:0 -1.60px 0 -1.60px">1</span>0003</div>
<div class="t" style="left:584.7px;top:916.11px;font-size:17px;color:#505050;letter-spacing:1.200px;">33438<span style="margin:0 -1.60px 0 -1.60px">1</span>0003</div>
<div class="t" style="left:741.0px;top:916.11px;font-size:17px;color:#505050;letter-spacing:1.300px;">$<span style="margin:0 -2.10px 0 -2.10px">1</span><span style="margin:0 -2.10px 0 -2.10px">1</span>8.00</div>
<div class="t" style="left:848.0px;top:916.11px;font-size:17px;color:#505050;letter-spacing:1.450px;">Jun 8th 2023</div>
<div class="t" style="left:1018.5px;top:916.11px;font-size:17px;color:#505050;letter-spacing:0.420px;">EXCEPTION</div>
<div class="r" style="left:1720.5px;top:924px;width:6.5px;height:1.6px;background:#6e6e6e;"></div>
<div class="r" style="left:2006.5px;top:906.80px;width:31.5px;height:30.5px;background:#e3d3b7;border-radius:3.5px"></div>
<div class="r" style="left:2021px;top:915.95px;width:2.4px;height:2.4px;background:#5e6370;border-radius:50%"></div>
<div class="r" style="left:2021px;top:920.75px;width:2.4px;height:2.4px;background:#5e6370;border-radius:50%"></div>
<div class="r" style="left:2021px;top:925.55px;width:2.4px;height:2.4px;background:#5e6370;border-radius:50%"></div>
<div class="r" style="left:332px;top:953.93px;width:1760px;height:59.93px;background:#f9fafb;"></div>
<div class="r" style="left:323.8px;top:953.93px;width:8.4px;height:59.93px;background:#234d74;"></div>
<div class="r" style="left:566px;top:1012.86px;width:1px;height:2px;background:#e4e4e4;"></div>
<div class="r" style="left:724px;top:1012.86px;width:1px;height:2px;background:#e4e4e4;"></div>
<div class="r" style="left:831px;top:1012.86px;width:1px;height:2px;background:#e4e4e4;"></div>
<div class="r" style="left:1001px;top:1012.86px;width:1px;height:2px;background:#e4e4e4;"></div>
<div class="r" style="left:1152px;top:1012.86px;width:1px;height:2px;background:#e4e4e4;"></div>
<div class="r" style="left:1380px;top:1012.86px;width:1px;height:2px;background:#e4e4e4;"></div>
<div class="r" style="left:1484px;top:1012.86px;width:1px;height:2px;background:#e4e4e4;"></div>
<div class="r" style="left:1704px;top:1012.86px;width:1px;height:2px;background:#e4e4e4;"></div>
<div class="r" style="left:1914px;top:1012.86px;width:1px;height:2px;background:#e4e4e4;"></div>
<div class="r" style="left:1989px;top:1012.86px;width:1px;height:2px;background:#e4e4e4;"></div>
<div class="r" style="left:2091px;top:1012.86px;width:1px;height:2px;background:#e4e4e4;"></div>
<div class="r" style="left:352.2px;top:972.13px;width:24.2px;height:24.2px;border:1.3px solid #868b92;border-radius:4px;background:#fff"></div>
<div class="t" style="left:428.0px;top:976.04px;font-size:17px;color:#2b4f77;letter-spacing:1.200px;-webkit-text-stroke:0.65px #2b4f77;">33439<span style="margin:0 -1.60px 0 -1.60px">1</span>56<span style="margin:0 -1.60px 0 -1.60px">1</span>8</div>
<div class="t" style="left:584.7px;top:976.04px;font-size:17px;color:#505050;letter-spacing:1.200px;">33439<span style="margin:0 -1.60px 0 -1.60px">1</span>56<span style="margin:0 -1.60px 0 -1.60px">1</span>8</div>
<div class="t" style="left:741.0px;top:976.04px;font-size:17px;color:#505050;letter-spacing:1.300px;">$<span style="margin:0 -2.10px 0 -2.10px">1</span>50.00</div>
<div class="t" style="left:848.0px;top:976.04px;font-size:17px;color:#505050;letter-spacing:1.450px;">Jun 9th 2023</div>
<div class="t" style="left:1018.5px;top:976.04px;font-size:17px;color:#505050;letter-spacing:0.420px;">EXCEPTION</div>
<div class="r" style="left:1720.5px;top:984px;width:6.5px;height:1.6px;background:#6e6e6e;"></div>
<div class="r" style="left:2006.5px;top:966.73px;width:31.5px;height:30.5px;background:#e3d3b7;border-radius:3.5px"></div>
<div class="r" style="left:2021px;top:975.88px;width:2.4px;height:2.4px;background:#5e6370;border-radius:50%"></div>
<div class="r" style="left:2021px;top:980.68px;width:2.4px;height:2.4px;background:#5e6370;border-radius:50%"></div>
<div class="r" style="left:2021px;top:985.48px;width:2.4px;height:2.4px;background:#5e6370;border-radius:50%"></div>
<div class="r" style="left:332px;top:1013.86px;width:1760px;height:59.93px;background:#fefefe;"></div>
<div class="r" style="left:323.8px;top:1013.86px;width:8.4px;height:59.93px;background:#f0bf62;"></div>
<div class="r" style="left:566px;top:1072.79px;width:1px;height:2px;background:#e4e4e4;"></div>
<div class="r" style="left:724px;top:1072.79px;width:1px;height:2px;background:#e4e4e4;"></div>
<div class="r" style="left:831px;top:1072.79px;width:1px;height:2px;background:#e4e4e4;"></div>
<div class="r" style="left:1001px;top:1072.79px;width:1px;height:2px;background:#e4e4e4;"></div>
<div class="r" style="left:1152px;top:1072.79px;width:1px;height:2px;background:#e4e4e4;"></div>
<div class="r" style="left:1380px;top:1072.79px;width:1px;height:2px;background:#e4e4e4;"></div>
<div class="r" style="left:1484px;top:1072.79px;width:1px;height:2px;background:#e4e4e4;"></div>
<div class="r" style="left:1704px;top:1072.79px;width:1px;height:2px;background:#e4e4e4;"></div>
<div class="r" style="left:1914px;top:1072.79px;width:1px;height:2px;background:#e4e4e4;"></div>
<div class="r" style="left:1989px;top:1072.79px;width:1px;height:2px;background:#e4e4e4;"></div>
<div class="r" style="left:2091px;top:1072.79px;width:1px;height:2px;background:#e4e4e4;"></div>
<div class="r" style="left:352.2px;top:1032.06px;width:24.2px;height:24.2px;border:1.3px solid #868b92;border-radius:4px;background:#fff"></div>
<div class="t" style="left:428.0px;top:1035.97px;font-size:17px;color:#2b4f77;letter-spacing:1.200px;-webkit-text-stroke:0.65px #2b4f77;">33438<span style="margin:0 -1.60px 0 -1.60px">1</span>4569</div>
<div class="t" style="left:584.7px;top:1035.97px;font-size:17px;color:#505050;letter-spacing:1.200px;">33438<span style="margin:0 -1.60px 0 -1.60px">1</span>4569</div>
<div class="t" style="left:741.0px;top:1035.97px;font-size:17px;color:#505050;letter-spacing:1.300px;">$<span style="margin:0 -2.10px 0 -2.10px">1</span>46.00</div>
<div class="t" style="left:848.0px;top:1035.97px;font-size:17px;color:#505050;letter-spacing:1.450px;">Jun 8th 2023</div>
<div class="t" style="left:1018.5px;top:1035.97px;font-size:17px;color:#505050;letter-spacing:0.420px;">EXCEPTION</div>
<div class="r" style="left:1720.5px;top:1044px;width:6.5px;height:1.6px;background:#6e6e6e;"></div>
<div class="r" style="left:2006.5px;top:1026.66px;width:31.5px;height:30.5px;background:#e3d3b7;border-radius:3.5px"></div>
<div class="r" style="left:2021px;top:1035.81px;width:2.4px;height:2.4px;background:#5e6370;border-radius:50%"></div>
<div class="r" style="left:2021px;top:1040.61px;width:2.4px;height:2.4px;background:#5e6370;border-radius:50%"></div>
<div class="r" style="left:2021px;top:1045.41px;width:2.4px;height:2.4px;background:#5e6370;border-radius:50%"></div>
<div class="r" style="left:332px;top:1073.79px;width:1760px;height:59.93px;background:#f9fafb;"></div>
<div class="r" style="left:323.8px;top:1073.79px;width:8.4px;height:59.93px;background:#234d74;"></div>
<div class="r" style="left:566px;top:1132.72px;width:1px;height:2px;background:#e4e4e4;"></div>
<div class="r" style="left:724px;top:1132.72px;width:1px;height:2px;background:#e4e4e4;"></div>
<div class="r" style="left:831px;top:1132.72px;width:1px;height:2px;background:#e4e4e4;"></div>
<div class="r" style="left:1001px;top:1132.72px;width:1px;height:2px;background:#e4e4e4;"></div>
<div class="r" style="left:1152px;top:1132.72px;width:1px;height:2px;background:#e4e4e4;"></div>
<div class="r" style="left:1380px;top:1132.72px;width:1px;height:2px;background:#e4e4e4;"></div>
<div class="r" style="left:1484px;top:1132.72px;width:1px;height:2px;background:#e4e4e4;"></div>
<div class="r" style="left:1704px;top:1132.72px;width:1px;height:2px;background:#e4e4e4;"></div>
<div class="r" style="left:1914px;top:1132.72px;width:1px;height:2px;background:#e4e4e4;"></div>
<div class="r" style="left:1989px;top:1132.72px;width:1px;height:2px;background:#e4e4e4;"></div>
<div class="r" style="left:2091px;top:1132.72px;width:1px;height:2px;background:#e4e4e4;"></div>
<div class="r" style="left:352.2px;top:1091.99px;width:24.2px;height:24.2px;border:1.3px solid #868b92;border-radius:4px;background:#fff"></div>
<div class="t" style="left:428.0px;top:1095.90px;font-size:17px;color:#2b4f77;letter-spacing:1.200px;-webkit-text-stroke:0.65px #2b4f77;">3343858<span style="margin:0 -1.60px 0 -1.60px">1</span>67</div>
<div class="t" style="left:584.7px;top:1095.90px;font-size:17px;color:#505050;letter-spacing:1.200px;">3343858<span style="margin:0 -1.60px 0 -1.60px">1</span>67</div>
<div class="t" style="left:741.0px;top:1095.90px;font-size:17px;color:#505050;letter-spacing:1.300px;">$50.96</div>
<div class="t" style="left:848.0px;top:1095.90px;font-size:17px;color:#505050;letter-spacing:1.450px;">Jun 9th 2023</div>
<div class="t" style="left:1018.5px;top:1095.90px;font-size:17px;color:#505050;letter-spacing:0.420px;">EXCEPTION</div>
<div class="r" style="left:1720.5px;top:1104px;width:6.5px;height:1.6px;background:#6e6e6e;"></div>
<div class="r" style="left:2006.5px;top:1086.59px;width:31.5px;height:30.5px;background:#e3d3b7;border-radius:3.5px"></div>
<div class="r" style="left:2021px;top:1095.74px;width:2.4px;height:2.4px;background:#5e6370;border-radius:50%"></div>
<div class="r" style="left:2021px;top:1100.54px;width:2.4px;height:2.4px;background:#5e6370;border-radius:50%"></div>
<div class="r" style="left:2021px;top:1105.34px;width:2.4px;height:2.4px;background:#5e6370;border-radius:50%"></div>
</div>
<div class="r" style="left:2096px;top:254px;width:8px;height:456px;background:#224e77;border-radius:4px"></div>
<div class="t" style="left:308.1px;top:1163.98px;font-size:16.8px;color:#444;letter-spacing:0.236px;">Showing 1 to 25 of 197 results</div>
<div class="t" style="left:1712.5px;top:1164.18px;font-size:16.8px;color:#3d6287;letter-spacing:0.408px;">Results per page</div>
<div class="r" style="left:1863px;top:1156px;width:72px;height:35px;background:#fff;border-radius:5px"></div>
<div class="t" style="left:1879.3px;top:1164.60px;font-size:15px;color:#333;">25</div>
<svg class="r" style="left:1906px;top:1166px" width="14" height="11" viewBox="0 0 14 11">
<path d="M2.5 3 L7 7.5 L11.5 3" fill="none" stroke="#222" stroke-width="2.2"/></svg>
<div class="r" style="left:1953px;top:1156px;width:166px;height:35px;background:#fff;border-radius:5px"></div>
<div class="r" style="left:2049px;top:1156px;width:1px;height:35px;background:#e4e4e4;"></div>
<svg class="r" style="left:1964px;top:1164px" width="12" height="18" viewBox="0 0 12 18">
<path d="M9 2 L3 9 L9 16" fill="none" stroke="#c4c4c4" stroke-width="1.6"/></svg>
<div class="t" style="left:1981.2px;top:1165.30px;font-size:15px;color:#c4c4c4;letter-spacing:0.234px;">Previous</div>
<div class="t" style="left:2058.7px;top:1165.30px;font-size:15px;color:#585858;letter-spacing:0.285px;">Next</div>
<svg class="r" style="left:2095px;top:1164px" width="12" height="18" viewBox="0 0 12 18">
<path d="M3 2 L9 9 L3 16" fill="none" stroke="#666" stroke-width="1.6"/></svg>
</body></html>
